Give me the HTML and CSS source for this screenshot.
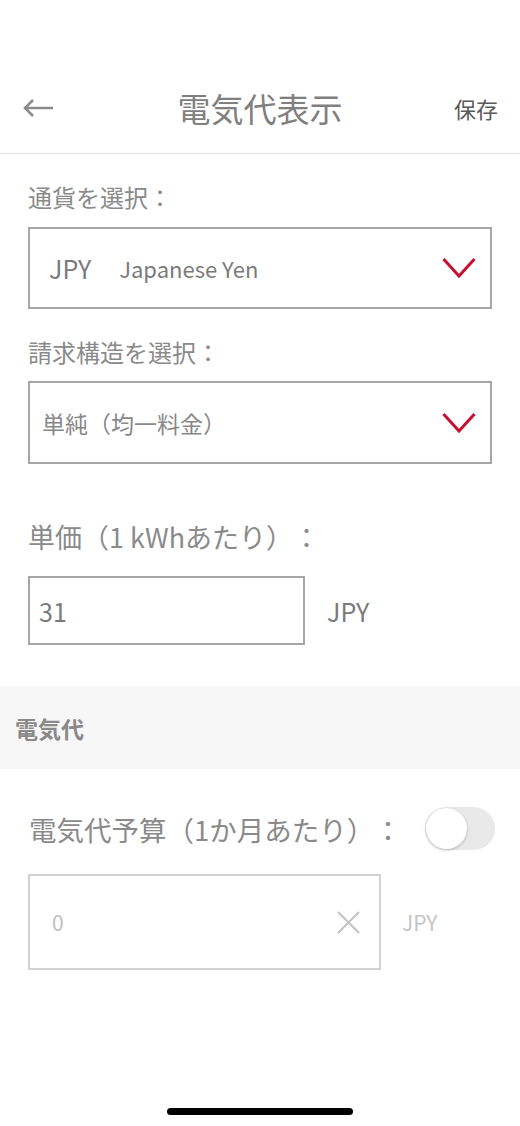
FILE: index.html
```html
<!DOCTYPE html>
<html lang="ja">
<head>
    <meta charset="UTF-8" />
    <meta name="viewport" content="width=device-width, initial-scale=1" />
    <title>電気代表示</title>
    <link rel="stylesheet" href="styles.css">
</head>
<body>
    <div class="status"></div>

    <header class="topbar">
        <button class="back" type="button" aria-label="戻る">
            <svg width="32" height="20" viewBox="0 0 32 20">
                <path d="M31 10H3M11 2L3 10l8 8" fill="none" stroke="#8a8a8a" stroke-width="2.5" />
            </svg>
        </button>
        <h1 class="title">電気代表示</h1>
        <button class="save" type="button">保存</button>
    </header>

    <div class="settings">
        <p class="field-label">通貨を選択：</p>
        <div class="select">
            <span class="code">JPY</span>
            <span class="currency">Japanese Yen</span>
            <svg class="chevron" width="34" height="22" viewBox="0 0 34 22">
                <path d="M1.5 2L17 19 32.5 2" fill="none" stroke="#c8102e" stroke-width="3" />
            </svg>
        </div>

        <p class="field-label second">請求構造を選択：</p>
        <div class="select plan">
            <span class="plan-name">単純（均一料金）</span>
            <svg class="chevron" width="34" height="22" viewBox="0 0 34 22">
                <path d="M1.5 2L17 19 32.5 2" fill="none" stroke="#c8102e" stroke-width="3" />
            </svg>
        </div>

        <p class="field-label big">単価（1 kWhあたり）：</p>
        <div class="input-row">
            <div class="input price">31</div>
            <span class="unit">JPY</span>
        </div>
    </div>

    <div class="section-bar">電気代</div>

    <div class="budget">
        <div class="budget-head">
            <span class="budget-label">電気代予算（1か月あたり）：</span>
            <span class="toggle"><span class="knob"></span></span>
        </div>
        <div class="input-row">
            <div class="input budget-input">
                <span>0</span>
                <svg width="25" height="25" viewBox="0 0 25 25">
                    <path d="M2 2l21 21M23 2L2 23" stroke="#c2c2c2" stroke-width="2" />
                </svg>
            </div>
            <span class="unit muted">JPY</span>
        </div>
    </div>

    <div class="home-bar"></div>
</body>
</html>
```

FILE: styles.css
```css
body {
    margin: 0;
    min-height: 100vh;
    display: flex;
    flex-direction: column;
    background: #fff;
    font-family: "Noto Sans CJK JP", "Noto Sans", sans-serif;
    color: #888;
    text-spacing-trim: space-all;
}

.status {
    height: 62px;
}

.topbar {
    height: 91px;
    border-bottom: 1px solid #e2e2e2;
    display: grid;
    grid-template-columns: 1fr auto 1fr;
    align-items: center;
    padding: 0 22px;
}

.back {
    justify-self: start;
    background: none;
    border: none;
    padding: 0;
    display: flex;
}

.title {
    margin: 0;
    font-size: 33px;
    font-weight: normal;
    color: #808080;
    line-height: 40px;
}

.save {
    justify-self: end;
    background: none;
    border: none;
    padding: 0;
    font-family: inherit;
    font-size: 22px;
    color: #5a5a5a;
}

.settings {
    padding: 28px 28px 0;
}

.field-label {
    margin: 0 0 15px;
    font-size: 24px;
    line-height: 30px;
    color: #8a8a8a;
}

.field-label.second {
    margin-top: 28px;
    margin-bottom: 14px;
}

.field-label.big {
    margin-top: 56px;
    margin-bottom: 22px;
    font-size: 27px;
    line-height: 34px;
}

.select {
    box-sizing: border-box;
    height: 82px;
    border: 2px solid #a6a6a6;
    display: flex;
    align-items: center;
    padding: 0 14px 0 19px;
}

.select.plan {
    height: 83px;
    padding-left: 12px;
}

.code {
    font-size: 25px;
    color: #7a7a7a;
}

.currency {
    margin-left: 28px;
    font-size: 22px;
    color: #7a7a7a;
}

.plan-name {
    font-size: 23px;
    color: #888;
}

.chevron {
    margin-left: auto;
}

.input-row {
    display: flex;
    align-items: center;
}

.input {
    box-sizing: border-box;
    border: 2px solid #a6a6a6;
    display: flex;
    align-items: center;
}

.price {
    width: 277px;
    height: 69px;
    padding-left: 9px;
    font-size: 25px;
    color: #7a7a7a;
}

.unit {
    margin-left: 22px;
    font-size: 25px;
    color: #7a7a7a;
}

.section-bar {
    margin-top: 41px;
    height: 83px;
    background: #f7f7f7;
    display: flex;
    align-items: center;
    padding-left: 15px;
    font-size: 23px;
    font-weight: bold;
    color: #8a8a8a;
}

.budget {
    padding: 38px 25px 0 28px;
}

.budget-head {
    display: flex;
    align-items: center;
    justify-content: space-between;
    padding-left: 1px;
}

.budget-label {
    font-size: 27.5px;
    line-height: 36px;
    color: #8a8a8a;
}

.toggle {
    box-sizing: border-box;
    width: 70px;
    height: 43px;
    border-radius: 22px;
    background: #e9e9e9;
    padding: 1px;
}

.knob {
    display: block;
    width: 41px;
    height: 41px;
    border-radius: 50%;
    background: #fff;
    box-shadow: 0 1px 3px rgba(0, 0, 0, 0.25);
}

.budget .input-row {
    margin-top: 24px;
}

.budget-input {
    width: 353px;
    height: 96px;
    border-color: #d2d2d2;
    padding: 0 18px 0 22px;
    justify-content: space-between;
    font-size: 21px;
    color: #c0c0c0;
}

.unit.muted {
    margin-left: 21px;
    font-size: 21px;
    color: #c4c4c4;
}

.home-bar {
    margin: auto auto 11px;
    width: 186px;
    height: 7px;
    border-radius: 4px;
    background: #000;
}
```
